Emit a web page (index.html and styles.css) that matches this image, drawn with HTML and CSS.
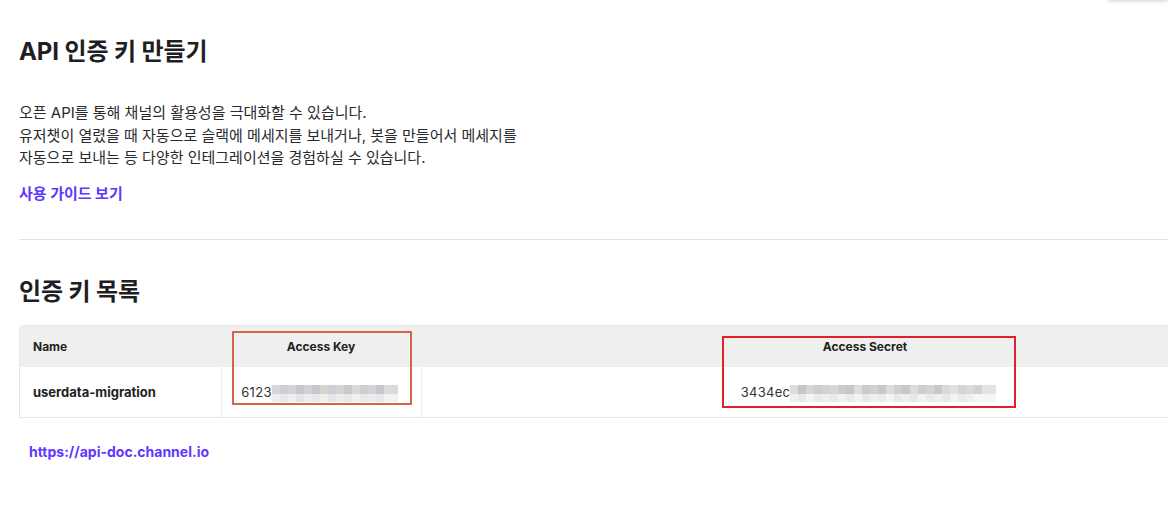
FILE: index.html
```html
<!DOCTYPE html>
<html lang="ko">
<head>
<meta charset="utf-8">
<title>API 인증 키</title>
<link rel="stylesheet" href="styles.css">
</head>
<body>
<div class="topbar-shadow"></div>
<main class="page">
  <h1 class="title">API 인증 키 만들기</h1>
  <p class="desc">오픈 API를 통해 채널의 활용성을 극대화할 수 있습니다.<br>유저챗이 열렸을 때 자동으로 슬랙에 메세지를 보내거나, 봇을 만들어서 메세지를<br>자동으로 보내는 등 다양한 인테그레이션을 경험하실 수 있습니다.</p>
  <a class="guide" href="#">사용 가이드 보기</a>
  <hr class="divider">
  <h2 class="title">인증 키 목록</h2>
  <div class="table-wrap">
    <div class="table">
      <div class="row head">
        <div class="cell c-name">Name</div>
        <div class="cell c-key">Access Key</div>
        <div class="cell c-secret">Access Secret</div>
      </div>
      <div class="row body">
        <div class="cell c-name strong">userdata-migration</div>
        <div class="cell c-key"><span class="val">6123</span><span class="mosaic m-key"></span></div>
        <div class="cell c-secret"><span class="val">3434ec</span><span class="mosaic m-secret"></span></div>
      </div>
    </div>
    <div class="mark mark-key"></div>
    <div class="mark mark-secret"></div>
  </div>
  <a class="doc" href="#">https://api-doc.channel.io</a>
</main>
</body>
</html>
```
FILE: styles.css
```css
html, body {
  margin: 0;
  padding: 0;
  background: #fff;
  overflow: hidden;
}
body {
  font-family: Inter, "Noto Sans CJK KR", sans-serif;
  color: #242428;
  position: relative;
  width: 1168px;
  height: 531px;
}
.topbar-shadow {
  position: absolute;
  top: -40px;
  right: 0;
  width: 60px;
  height: 40px;
  background: #fff;
  box-shadow: 0 1px 4px rgba(0,0,0,0.18);
}
.page {
  padding: 36px 0 0 19px;
}
.title {
  margin: 0;
  font-size: 24px;
  line-height: 32px;
  font-weight: 700;
  color: #1f1f23;
  letter-spacing: -0.1px;
}
.desc {
  margin: 34px 0 0;
  font-size: 15px;
  line-height: 22.5px;
  color: #2a2a2e;
}
.guide {
  display: block;
  margin-top: 14px;
  font-size: 15px;
  line-height: 20px;
  font-weight: 700;
  color: #6236ff;
  text-decoration: none;
}
.divider {
  margin: 35px 0 36px;
  border: 0;
  border-top: 1px solid #e2e2e2;
  height: 0;
}
.table-wrap {
  position: relative;
  margin-top: 17px;
  width: 1291px;
}
.table {
  border: 1px solid #e6e6e6;
  border-radius: 4px 4px 0 0;
  overflow: hidden;
}
.row {
  display: grid;
  grid-template-columns: 201px 200px 1fr;
}
.row.head {
  height: 41px;
  background: #efefef;
}
.row.body {
  height: 50px;
  background: #fff;
}
.cell {
  display: flex;
  align-items: center;
  justify-content: center;
  font-size: 12px;
  font-weight: 700;
  color: #222;
}
.row.body .cell {
  font-size: 13px;
  font-weight: 400;
  color: #333;
  padding-top: 1px;
}
.row.body .cell + .cell {
  border-left: 1px solid #ececec;
}
.row.body .c-secret {
  border-left: 1px solid #f2f2f2;
}
.cell.c-name {
  justify-content: flex-start;
  padding-left: 13px;
}
.row.body .cell.strong {
  font-weight: 700;
  color: #222;
}
.val {
  letter-spacing: 0.3px;
}
.c-key .val {
  margin-left: -2px;
}
.c-secret .val {
  margin-left: 6px;
}
.mosaic {
  display: inline-block;
  height: 17px;
  margin-top: 2px;
}
.m-key {
  width: 126px;
  margin-right: 2px;
  background:
    linear-gradient(90deg, #d8d6da 0 8px, #cfcdd2 8px 16px, #d6d4d8 16px 24px, #c8c5cb 24px 32px, #d1d0d5 32px 40px, #c6c6cf 40px 48px, #d5d3d1 48px 56px, #cdd0d4 56px 64px, #d3d3d6 64px 72px, #c9c8cd 72px 80px, #d8d8da 80px 88px, #cfcdd1 88px 96px, #d4d3d6 96px 104px, #c5c8cf 104px 112px, #dadada 112px 126px) top / 100% 9px no-repeat,
    linear-gradient(90deg, #eeeeee 0 8px, #e7e7e8 8px 16px, #efefef 16px 24px, #e5e5e7 24px 32px, #ececec 32px 40px, #e9e9ea 40px 48px, #efefef 48px 56px, #e6e6e8 56px 64px, #ececec 64px 72px, #e8e8e9 72px 80px, #efefef 80px 88px, #e9e9ea 88px 96px, #ededed 96px 104px, #e7e7e9 104px 112px, #f2f2f2 112px 126px) bottom / 100% 8px no-repeat;
}
.m-secret {
  width: 206px;
  background:
    linear-gradient(90deg, #dcdcdc 0 8px, #c9c4c8 8px 16px, #d6d6d8 16px 24px, #cdcdcf 24px 32px, #d2d1d3 32px 40px, #d7d6d8 40px 48px, #cfcbcd 48px 56px, #c8c6cb 56px 64px, #dddddd 64px 72px, #cbcacd 72px 80px, #d2d2d5 80px 88px, #c6c9cc 88px 96px, #dcdcdc 96px 104px, #cfcfd0 104px 112px, #c9c7c3 112px 120px, #dcdcdc 120px 128px, #cfcccf 128px 136px, #d4d4d6 136px 144px, #cbc7c7 144px 152px, #d9dadc 152px 160px, #e2e2e3 160px 168px, #d5d5d7 168px 176px, #dadada 176px 184px, #d1d1d3 184px 192px, #e3e3e3 192px 206px) top / 100% 9px no-repeat,
    linear-gradient(90deg, #f0f0f0 0 8px, #e9e9ea 8px 16px, #f3f3f3 16px 24px, #ebebec 24px 32px, #efefef 32px 40px, #e9e9e9 40px 48px, #f1f1f1 48px 56px, #eaeaeb 56px 64px, #f2f2f2 64px 72px, #e8e8e9 72px 80px, #f0f0f0 80px 88px, #ebebec 88px 96px, #f4f4f4 96px 104px, #e9e9ea 104px 112px, #efefef 112px 120px, #e7e7e8 120px 128px, #f1f1f1 128px 136px, #eaeaea 136px 144px, #efefef 144px 152px, #e8e8e9 152px 160px, #f2f2f2 160px 168px, #eaeaeb 168px 176px, #f0f0f0 176px 184px, #f6f6f6 184px 206px) bottom / 100% 8px no-repeat;
}
.mark {
  position: absolute;
  box-sizing: border-box;
  border: 2px solid;
}
.mark-key {
  left: 213px;
  top: 6px;
  width: 180px;
  height: 74px;
  border-color: #d8634b;
}
.mark-secret {
  left: 703px;
  top: 11px;
  width: 294px;
  height: 72px;
  border-color: #e3202a;
}
.doc {
  display: block;
  margin: 24px 0 0 10px;
  font-size: 14px;
  line-height: 20px;
  font-weight: 700;
  color: #6236ff;
  text-decoration: none;
}
```
